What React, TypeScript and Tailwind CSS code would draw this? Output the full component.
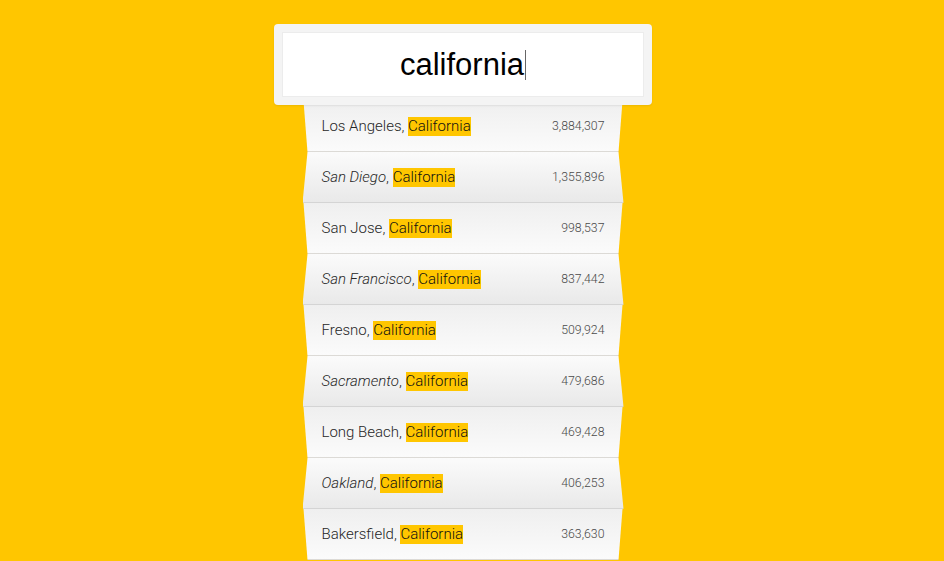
import React from "react";

type City = { name: string; pop: string };

const cities: City[] = [
  { name: "Los Angeles", pop: "3,884,307" },
  { name: "San Diego", pop: "1,355,896" },
  { name: "San Jose", pop: "998,537" },
  { name: "San Francisco", pop: "837,442" },
  { name: "Fresno", pop: "509,924" },
  { name: "Sacramento", pop: "479,686" },
  { name: "Long Beach", pop: "469,428" },
  { name: "Oakland", pop: "406,253" },
  { name: "Bakersfield", pop: "363,630" },
];

function Row({ city, index }: { city: City; index: number }) {
  // folds alternate: even rows lean back at the bottom, odd rows at the top
  const wideTop = index % 2 === 0;
  return (
    <div
      className={
        wideTop
          ? "h-[51px] shrink-0 flex items-center justify-between px-[19px] pt-[1px] bg-linear-to-b from-[#efefef] to-[#fbfbfb] border-b border-[#dcdad6] [clip-path:polygon(1px_0,calc(100%_-_1px)_0,calc(100%_-_5px)_100%,5px_100%)]"
          : "h-[51px] shrink-0 flex items-center justify-between px-[19px] pt-[1px] bg-linear-to-b from-[#fbfbfb] to-[#e9e9e9] border-b border-[#d4d4d4] [clip-path:polygon(5px_0,calc(100%_-_5px)_0,100%_100%,0_100%)]"
      }
    >
      <span className="text-[15px] font-light text-[#262626] font-['Roboto',sans-serif] leading-[19px]">
        <span className={wideTop ? "" : "italic"}>{city.name}</span>,{" "}
        <span className="inline-block bg-[#ffc600] text-[#111] leading-[19px]">
          California
        </span>
      </span>
      <span className="text-[12.3px] font-light text-[#4a4a4a] font-['Roboto',sans-serif]">
        {city.pop}
      </span>
    </div>
  );
}

export default function App() {
  return (
    <div className="h-screen overflow-hidden bg-[#ffc600] flex flex-col items-center pt-[24px] pr-[18px]">
      <div className="relative z-10 shrink-0 w-[378px] h-[81px] rounded-[4px] bg-[#f4f4f4] p-[8px] shadow-[0_1px_2px_rgba(0,0,0,0.08)]">
        <div className="h-full bg-white border border-[#ececec] flex items-center justify-center">
          <span className="text-[31px] text-black font-['Liberation_Sans',Arial,sans-serif] leading-none">
            california
          </span>
          <span className="inline-block w-px h-[30px] bg-[#666] ml-[1px]" />
        </div>
      </div>
      <div className="w-[321px] shrink-0 -mt-[4px] flex flex-col">
        {cities.map((c, i) => (
          <Row key={c.name} city={c} index={i} />
        ))}
      </div>
    </div>
  );
}
